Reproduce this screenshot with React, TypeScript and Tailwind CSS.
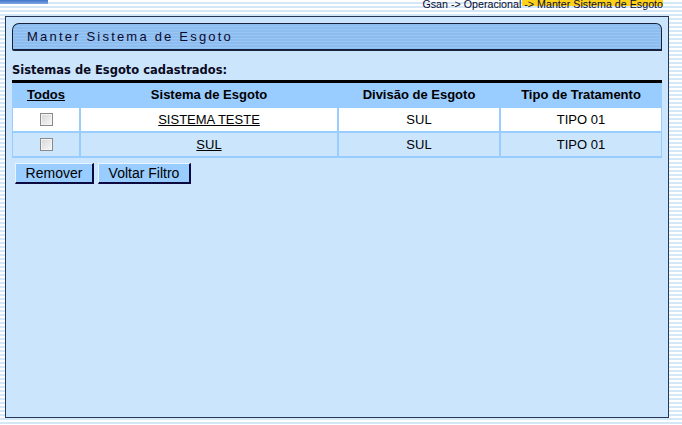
const rows = [
  { sistema: 'SISTEMA TESTE', divisao: 'SUL', tipo: 'TIPO 01', bg: 'bg-white' },
  { sistema: 'SUL', divisao: 'SUL', tipo: 'TIPO 01', bg: 'bg-[#cbe5fd]' },
];

function Checkbox() {
  return (
    <span className="inline-block h-[13px] w-[13px] border border-[#8a8a8a] bg-[linear-gradient(135deg,#d6d6d6,#f8f8f8)] shadow-[inset_0_0_0_1px_#f4f4f4]" />
  );
}

export default function App() {
  return (
    <div className="h-[425px] w-[682px] overflow-hidden bg-[repeating-linear-gradient(180deg,#ffffff_0px,#ffffff_2px,#d4e7f7_2px,#d4e7f7_4px)] font-['Liberation_Sans',Arial,sans-serif]">
      {/* top strip */}
      <div className="flex h-[16px] items-start">
        <div className="h-[4px] w-[48px] bg-[linear-gradient(180deg,#3f73c8,#7fa9e4)]" />
        <div className="ml-auto mr-[19px] flex h-[10px] items-end overflow-hidden">
          <div className="relative text-[10.7px] leading-[12px] text-[#0a0a30]">
            <span className="absolute right-[-5px] top-[0px] h-[8px] w-[146px] bg-[#ffd21a]" />
            <span className="relative">Gsan -&gt; Operacional -&gt; Manter Sistema de Esgoto</span>
          </div>
        </div>
      </div>

      {/* main panel */}
      <div className="ml-[5px] h-[402px] w-[664px] border border-[#26375a] bg-[#cbe5fd] px-[6px] pt-[6px]">
        <div className="flex h-[28px] w-[650px] items-center rounded-tl-[7px] rounded-tr-[6px] rounded-bl-[2px] border border-b-2 border-[#17233c] bg-[repeating-linear-gradient(180deg,#8cbcf0_0px,#8cbcf0_2px,#9ac6f4_2px,#9ac6f4_3px)] pl-[14px] pt-[1px]">
          <span className="text-[13px] tracking-[2.2px] text-[#0b0b2e]">Manter Sistema de Esgoto</span>
        </div>

        <div className="mt-[12px] font-['DejaVu_Sans',Verdana,sans-serif] text-[11.5px] font-bold leading-[15px] text-[#0a0a20]">
          Sistemas de Esgoto cadastrados:
        </div>

        <div className="mt-[2px] h-[3px] w-[650px] bg-black" />

        <div className="w-[650px] bg-[#99ccff] pb-[2px] pl-[1px] text-[13px] text-black">
          <div className="grid grid-cols-[66px_256px_160px_160px] gap-x-[2px] gap-y-[2px]">
            <div className="flex h-[23px] items-center justify-center font-bold underline">Todos</div>
            <div className="flex h-[23px] items-center justify-center font-bold">Sistema de Esgoto</div>
            <div className="flex h-[23px] items-center justify-center font-bold">Divisão de Esgoto</div>
            <div className="flex h-[23px] items-center justify-center font-bold">Tipo de Tratamento</div>
            {rows.map((r) => (
              <div key={r.sistema} className="contents">
                <div className={`flex h-[23px] items-center justify-center ${r.bg}`}>
                  <Checkbox />
                </div>
                <div className={`flex h-[23px] items-center justify-center underline ${r.bg}`}>{r.sistema}</div>
                <div className={`flex h-[23px] items-center justify-center ${r.bg}`}>{r.divisao}</div>
                <div className={`flex h-[23px] items-center justify-center ${r.bg}`}>{r.tipo}</div>
              </div>
            ))}
          </div>
        </div>

        <div className="ml-[3px] mt-[5px] flex gap-[4px]">
          <button
            type="button"
            className="h-[21px] w-[79px] border border-b-2 border-r-2 border-l-[#e8f4ff] border-t-[#e8f4ff] border-b-[#0a0a40] border-r-[#0a0a40] bg-[#99ccff] text-[14px] leading-none text-black"
          >
            Remover
          </button>
          <button
            type="button"
            className="h-[21px] w-[93px] border border-b-2 border-r-2 border-l-[#e8f4ff] border-t-[#e8f4ff] border-b-[#0a0a40] border-r-[#0a0a40] bg-[#99ccff] text-[14px] leading-none text-black"
          >
            Voltar Filtro
          </button>
        </div>
      </div>
    </div>
  );
}
